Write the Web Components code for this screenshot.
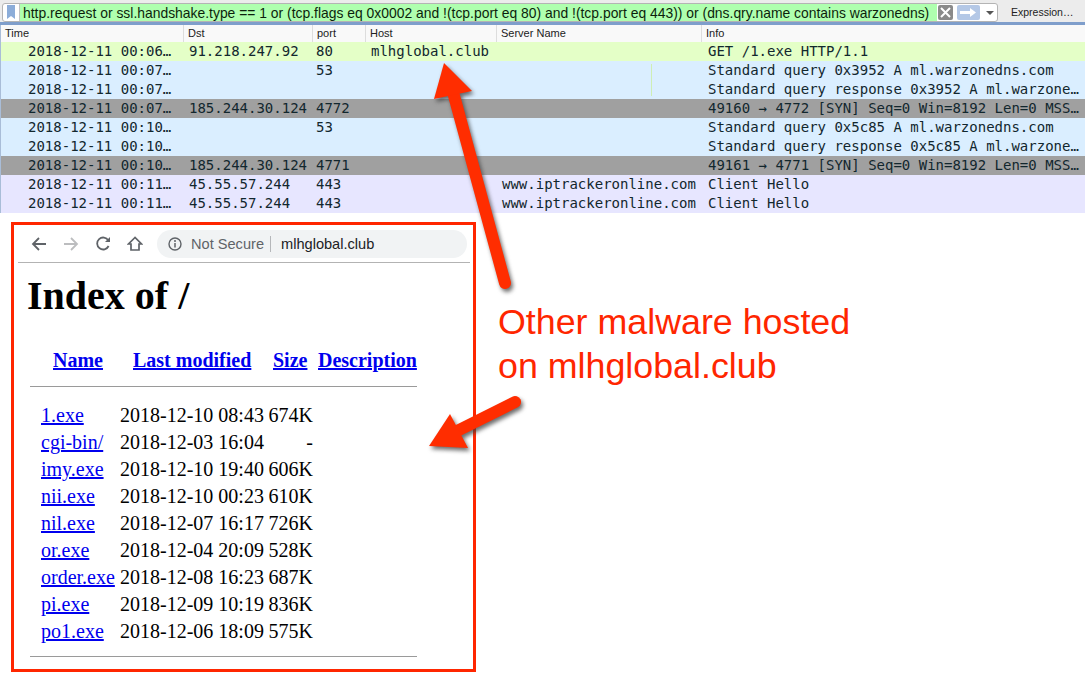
<!DOCTYPE html>
<html>
<head>
<meta charset="utf-8">
<style>
  html, body { margin: 0; padding: 0; background: #fff; }
  body { width: 1085px; height: 677px; overflow: hidden; position: relative; }
</style>
</head>
<body>
<capture-sheet></capture-sheet>

<script>
const PACKETS = [
  { color: "#e4ffc7", time: "2018-12-11 00:06…", dst: "91.218.247.92", port: "80", host: "mlhglobal.club", info: "GET /1.exe HTTP/1.1" },
  { color: "#daeeff", time: "2018-12-11 00:07…", port: "53", info: "Standard query 0x3952 A ml.warzonedns.com" },
  { color: "#daeeff", time: "2018-12-11 00:07…", info: "Standard query response 0x3952 A ml.warzone…" },
  { color: "#a0a0a0", time: "2018-12-11 00:07…", dst: "185.244.30.124", port: "4772", info: "49160 → 4772 [SYN] Seq=0 Win=8192 Len=0 MSS…" },
  { color: "#daeeff", time: "2018-12-11 00:10…", port: "53", info: "Standard query 0x5c85 A ml.warzonedns.com" },
  { color: "#daeeff", time: "2018-12-11 00:10…", info: "Standard query response 0x5c85 A ml.warzone…" },
  { color: "#a0a0a0", time: "2018-12-11 00:10…", dst: "185.244.30.124", port: "4771", info: "49161 → 4771 [SYN] Seq=0 Win=8192 Len=0 MSS…" },
  { color: "#e7e6ff", time: "2018-12-11 00:11…", dst: "45.55.57.244", port: "443", server: "www.iptrackeronline.com", info: "Client Hello" },
  { color: "#e7e6ff", time: "2018-12-11 00:11…", dst: "45.55.57.244", port: "443", server: "www.iptrackeronline.com", info: "Client Hello" }
];

const FILES = [
  ["1.exe", "2018-12-10 08:43", "674K"],
  ["cgi-bin/", "2018-12-03 16:04", "-"],
  ["imy.exe", "2018-12-10 19:40", "606K"],
  ["nii.exe", "2018-12-10 00:23", "610K"],
  ["nil.exe", "2018-12-07 16:17", "726K"],
  ["or.exe", "2018-12-04 20:09", "528K"],
  ["order.exe", "2018-12-08 16:23", "687K"],
  ["pi.exe", "2018-12-09 10:19", "836K"],
  ["po1.exe", "2018-12-06 18:09", "575K"]
];

class FilterBar extends HTMLElement {
  constructor() {
    super();
    this.attachShadow({ mode: "open" });
    this.shadowRoot.innerHTML = `
      <style>
        :host { display: flex; height: 22px; background: #ececec; align-items: flex-start; padding: 3px 0 0 2px; box-sizing: border-box; font-family: "Liberation Sans", sans-serif; }
        .box { width: 996px; height: 19px; display: flex; background: #fff; border: 1px solid #b4b4b4; border-radius: 3px; box-sizing: border-box; overflow: hidden; }
        .mark { width: 17px; flex: none; display: flex; justify-content: center; border-right: 1px solid #c4c4c4; box-sizing: border-box; }
        .text { width: 917px; flex: none; background: #afffaf; font-size: 13.9px; line-height: 18px; color: #0c1f0c; padding-left: 3px; box-sizing: border-box; white-space: nowrap; overflow: hidden; }
        .tools { display: flex; align-items: center; flex: 1; }
        .clear { width: 15px; height: 15px; margin-left: 1px; }
        .apply { width: 23px; height: 15px; margin-left: 4px; }
        .drop { width: 10px; height: 6px; margin-left: 5px; }
        .expr { font-size: 10.5px; line-height: 18px; color: #222; margin-left: 13px; }
      </style>
      <div class="box">
        <div class="mark">
          <svg width="10" height="16" viewBox="0 0 10 16"><path d="M1 1h8v14L5 12 1 15z" fill="#8cadd9"/></svg>
        </div>
        <div class="text">http.request or ssl.handshake.type == 1 or (tcp.flags eq 0x0002 and !(tcp.port eq 80) and !(tcp.port eq 443)) or (dns.qry.name contains warzonedns)</div>
        <div class="tools">
          <svg class="clear" viewBox="0 0 15 15"><rect width="15" height="15" rx="2" fill="#8a8a8a"/><path d="M3 3l9 9M12 3l-9 9" stroke="#fff" stroke-width="2"/></svg>
          <svg class="apply" viewBox="0 0 23 15"><rect width="23" height="15" rx="2" fill="#b4c8e6"/><path d="M3 7.500h11" stroke="#fff" stroke-width="3"/><path d="M13 3l6 4.500-6 4.500z" fill="#fff"/></svg>
          <svg class="drop" viewBox="0 0 10 6"><path d="M1 1h8L5 5z" fill="#555"/></svg>
        </div>
      </div>
      <div class="expr">Expression…</div>`;
  }
}

class PacketRow extends HTMLElement {
  constructor() {
    super();
    this.attachShadow({ mode: "open" });
  }

  set packet(p) {
    this.shadowRoot.innerHTML = `
      <style>
        :host { display: grid; grid-template-columns: 188px 127px 55px 131px 206px 1fr; height: 19px; font: 14px/19px "DejaVu Sans Mono", monospace; color: #12272e; white-space: pre; }
        .time { padding-left: 27px; }
      </style>
      <span class="time">${p.time}</span><span>${p.dst || ""}</span><span>${p.port || ""}</span><span>${p.host || ""}</span><span>${p.server || ""}</span><span>${p.info || ""}</span>`;
    this.style.background = p.color;
  }
}

class PacketList extends HTMLElement {
  constructor() {
    super();
    this.attachShadow({ mode: "open" });
    this.shadowRoot.innerHTML = `
      <style>
        :host { display: block; position: relative; }
        .line { height: 3px; background: #7f9ecb; }
        .body { border-left: 1px solid #a9bdd8; }
        .head { display: grid; grid-template-columns: 182px 129px 53px 131px 205px 1fr; height: 17px; background: #f9f9f9; font: 11px/17px "Liberation Sans", sans-serif; color: #222; }
        .head span { padding-left: 4px; border-left: 1px solid #ddd; }
        .head span:first-child { border-left: 0; }
        .streak { position: absolute; left: 651px; top: 42px; width: 1px; height: 32px; background: #cfeeb4; }
      </style>
      <div class="line"></div>
      <div class="body">
        <div class="head"><span>Time</span><span>Dst</span><span>port</span><span>Host</span><span>Server Name</span><span>Info</span></div>
        <div class="rows"></div>
      </div>
      <div class="streak"></div>`;
    const rows = this.shadowRoot.querySelector(".rows");
    PACKETS.forEach(p => {
      const row = document.createElement("packet-row");
      row.packet = p;
      rows.appendChild(row);
    });
  }
}

class BrowserBar extends HTMLElement {
  constructor() {
    super();
    this.attachShadow({ mode: "open" });
    this.shadowRoot.innerHTML = `
      <style>
        :host { display: flex; align-items: center; height: 38px; margin: 0 3px 0 4px; border-bottom: 1px solid #b3b3b3; box-sizing: border-box; font-family: "Liberation Sans", sans-serif; }
        svg { flex: none; display: block; }
        .back { margin-left: 13px; }
        .fwd { margin-left: 16px; }
        .reload { margin-left: 17px; }
        .home { margin-left: 16px; }
        .omni { flex: none; width: 310px; height: 28px; margin-left: 14px; border-radius: 14px; background: #f1f3f4; display: flex; align-items: center; font-size: 14.6px; }
        .info { margin-left: 11px; }
        .ns { color: #5f6368; margin-left: 9px; }
        .sep { width: 1px; height: 16px; background: #b5b7ba; margin: 0 10px 0 6px; }
        .url { color: #202124; }
      </style>
      <svg class="back" width="16" height="14" viewBox="0 0 16 14"><path d="M15 7H2M8 1L2 7l6 6" fill="none" stroke="#5f6368" stroke-width="1.800"/></svg>
      <svg class="fwd" width="16" height="14" viewBox="0 0 16 14"><path d="M1 7h13M8 1l6 6-6 6" fill="none" stroke="#bcbdbf" stroke-width="1.800"/></svg>
      <svg class="reload" width="15" height="15" viewBox="0 0 15 15"><path d="M12.600 10a6 6 0 1 1-.3-5.600" fill="none" stroke="#5f6368" stroke-width="1.800"/><path d="M14 1v5H9z" fill="#5f6368"/></svg>
      <svg class="home" width="16" height="15" viewBox="0 0 16 15"><path d="M8 1.500L1.500 8H4v6h8V8h2.500z" fill="none" stroke="#5f6368" stroke-width="1.700" stroke-linejoin="miter"/></svg>
      <div class="omni">
        <svg class="info" width="14" height="14" viewBox="0 0 14 14"><circle cx="7" cy="7" r="6" fill="none" stroke="#5f6368" stroke-width="1.400"/><path d="M7 6v4.500" stroke="#5f6368" stroke-width="1.500"/><circle cx="7" cy="4" r="1" fill="#5f6368"/></svg>
        <span class="ns">Not Secure</span><span class="sep"></span><span class="url">mlhglobal.club</span>
      </div>`;
  }
}

class DirListing extends HTMLElement {
  constructor() {
    super();
    this.attachShadow({ mode: "open" });
    const rows = FILES.map(f => `
      <tr><td class="n"><a href="#">${f[0]}</a></td><td class="d">${f[1]}</td><td class="s">${f[2]}</td></tr>`).join("");
    this.shadowRoot.innerHTML = `
      <style>
        :host { display: block; padding: 0 0 0 13px; font-family: "Liberation Serif", serif; font-size: 20px; color: #000; }
        h1 { margin: 9px 0 0; font-size: 40px; line-height: 48px; font-weight: bold; }
        table { border-collapse: collapse; margin: 27px 0 0 3px; }
        a { color: #0000ee; }
        th { font-weight: bold; height: 27px; padding: 0; text-align: left; }
        td { height: 27px; padding: 0; white-space: nowrap; }
        .n { width: 90px; padding-left: 11px; box-sizing: border-box; }
        .d { width: 148px; }
        .s { width: 45px; text-align: right; }
        .rule-top td { height: 24px; }
        .gap-top td { height: 4px; }
        .gap-end td { height: 5px; }
        .rule-end td { height: 12px; }
        hr { margin: 0; border: 0; border-top: 1px solid #9a9a9a; }
      </style>
      <h1>Index of /</h1>
      <table>
        <tr>
          <th style="padding-left:23px"><a href="#">Name</a></th>
          <th style="padding-left:13px"><a href="#">Last modified</a></th>
          <th style="padding-left:5px"><a href="#">Size</a></th>
          <th style="padding-left:5px"><a href="#">Description</a></th>
        </tr>
        <tr class="rule-top"><td colspan="4"><hr></td></tr>
        <tr class="gap-top"><td colspan="4"></td></tr>
        ${rows}
        <tr class="gap-end"><td colspan="4"></td></tr>
        <tr class="rule-end"><td colspan="4"><hr></td></tr>
      </table>`;
  }
}

class BrowserShot extends HTMLElement {
  constructor() {
    super();
    this.attachShadow({ mode: "open" });
    this.shadowRoot.innerHTML = `
      <style>
        :host { display: block; width: 465px; height: 450px; border: 3px solid #ff2600; box-sizing: border-box; flex: none; background: #fff; }
      </style>
      <browser-bar></browser-bar>
      <dir-listing></dir-listing>`;
  }
}

class CaptureSheet extends HTMLElement {
  constructor() {
    super();
    this.attachShadow({ mode: "open" });
    this.shadowRoot.innerHTML = `
      <style>
        :host { display: block; position: relative; width: 1085px; height: 677px; }
        .lower { display: flex; padding: 9px 0 0 11px; }
        .caption { font: 35.800px/44px "Liberation Sans", sans-serif; color: #ff2600; margin: 78px 0 0 22px; white-space: nowrap; }
        .arrows { position: absolute; left: 0; top: 0; filter: drop-shadow(2px 3px 2px rgba(60,60,60,.75)); }
      </style>
      <filter-bar></filter-bar>
      <packet-list></packet-list>
      <div class="lower">
        <browser-shot></browser-shot>
        <div class="caption">Other malware hosted<br>on mlhglobal.club</div>
      </div>
      <svg class="arrows" width="1085" height="677" viewBox="0 0 1085 677">
        <path d="M505 283L453 92" stroke="#ff2d00" stroke-width="12" stroke-linecap="round" fill="none"/>
        <path d="M444 63L472 91L434 99z" fill="#ff2d00"/>
        <path d="M515 402L455 432" stroke="#ff2d00" stroke-width="12" stroke-linecap="round" fill="none"/>
        <path d="M429 446L450 414L468 448z" fill="#ff2d00"/>
      </svg>`;
  }
}

customElements.define("filter-bar", FilterBar);
customElements.define("packet-row", PacketRow);
customElements.define("packet-list", PacketList);
customElements.define("browser-bar", BrowserBar);
customElements.define("dir-listing", DirListing);
customElements.define("browser-shot", BrowserShot);
customElements.define("capture-sheet", CaptureSheet);
</script>
</body>
</html>
